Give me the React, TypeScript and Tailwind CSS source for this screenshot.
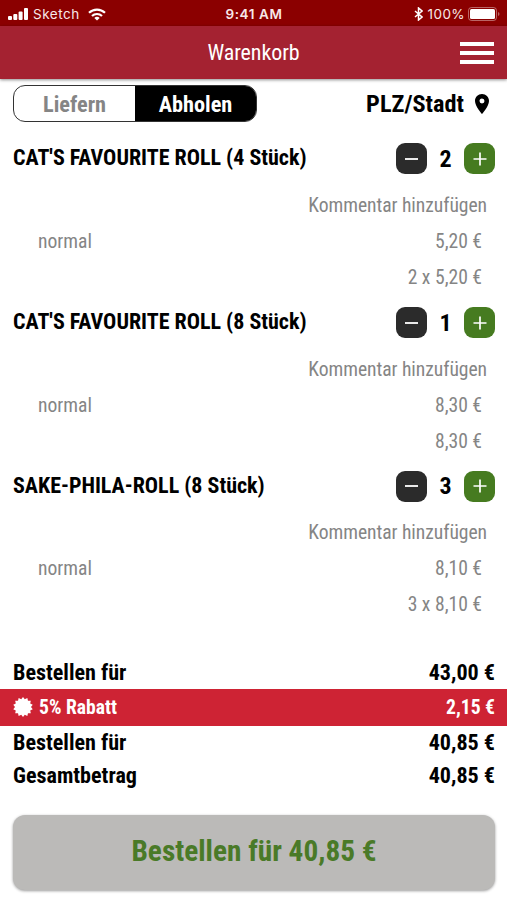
import { useState } from "react";
import { MdLocationOn } from "react-icons/md";

type Artikel = {
  id: number;
  name: string;
  menge: number;
  variante: string;
  preis: string;
  summe: string;
};

const ARTIKEL: Artikel[] = [
  { id: 1, name: "CAT'S FAVOURITE ROLL (4 Stück)", menge: 2, variante: "normal", preis: "5,20 €", summe: "2 x 5,20 €" },
  { id: 2, name: "CAT'S FAVOURITE ROLL (8 Stück)", menge: 1, variante: "normal", preis: "8,30 €", summe: "8,30 €" },
  { id: 3, name: "SAKE-PHILA-ROLL (8 Stück)", menge: 3, variante: "normal", preis: "8,10 €", summe: "3 x 8,10 €" },
];

export default function App() {
  const [abholen, setAbholen] = useState(true);

  return (
    <div className="flex h-[900px] w-[507px] flex-col overflow-hidden bg-white font-['Roboto_Condensed','Roboto',sans-serif] text-black [font-stretch:75%]">
      <StatusBar />

      <header className="grid h-[53px] shrink-0 grid-cols-[1fr_auto_1fr] items-center bg-[#a42231] px-[13px] text-white shadow-[0_1px_3px_rgba(0,0,0,0.45)]">
        <h1 className="col-start-2 text-[22px] leading-none tracking-[-0.1px]">Warenkorb</h1>
        <button aria-label="Menü" className="flex w-[34px] flex-col gap-[5px] justify-self-end">
          <span className="h-1 bg-white" />
          <span className="h-1 bg-white" />
          <span className="h-1 bg-white" />
        </button>
      </header>

      <div className="flex items-center justify-between px-[13px] pt-[6px]">
        <div className="flex h-[37px] w-[244px] overflow-hidden rounded-xl border border-[#333] text-[22.3px] font-bold">
          <button
            onClick={() => setAbholen(false)}
            className={`flex-1 pt-px ${abholen ? "text-[#858585]" : "bg-black text-white"}`}
          >
            Liefern
          </button>
          <button
            onClick={() => setAbholen(true)}
            className={`flex-1 pt-px ${abholen ? "bg-black text-white" : "text-[#858585]"}`}
          >
            Abholen
          </button>
        </div>
        <div className="flex items-center gap-[6px] text-[24.3px] font-bold">
          <span className="pt-px">PLZ/Stadt</span>
          <MdLocationOn className="size-6" />
        </div>
      </div>

      <main className="pt-[18px]">
        {ARTIKEL.map((a) => (
          <ArtikelZeile key={a.id} artikel={a} />
        ))}
      </main>

      <section className="pt-[24.5px] text-[22.1px] font-bold">
        <Summe label="Bestellen für" betrag="43,00 €" />
        <div className="flex h-[37px] items-center bg-[#ce2334] pr-3 pl-[13px] text-[19.6px] text-white">
          <RabattIcon />
          <span className="ml-[6px] flex-1 pt-px">5% Rabatt</span>
          <span className="pt-px">2,15 €</span>
        </div>
        <Summe label="Bestellen für" betrag="40,85 €" />
        <Summe label="Gesamtbetrag" betrag="40,85 €" />
      </section>

      <button className="mr-3 ml-[13px] mt-[23px] h-[75px] shrink-0 rounded-xl bg-[#bbbab8] text-[29.3px] font-bold text-[#4a7a28] shadow-[0_1px_3px_rgba(0,0,0,0.4)]">
        Bestellen für 40,85 €
      </button>
    </div>
  );
}

function ArtikelZeile({ artikel }: { artikel: Artikel }) {
  return (
    <article className="h-[163.6px]">
      <div className="flex h-[37px] items-center justify-between pr-3 pl-[13px]">
        <h2 className="pb-[2px] text-[22px] font-bold">{artikel.name}</h2>
        <div className="flex items-center">
          <button aria-label="Weniger" className="flex size-[31px] items-center justify-center rounded-[9px] bg-[#2b2b2b]">
            <span className="h-[2px] w-[13px] bg-white/90" />
          </button>
          <span className="w-[37px] text-center text-2xl font-bold">{artikel.menge}</span>
          <button aria-label="Mehr" className="flex size-[31px] items-center justify-center rounded-[9px] bg-[#467b20]">
            <svg viewBox="0 0 14 14" className="size-[14px]" stroke="white" strokeWidth="1.7">
              <path d="M7 0.5v13M0.5 7h13" />
            </svg>
          </button>
        </div>
      </div>
      <div className="pt-[10.5px] text-[19.6px] text-[#858585]">
        <p className="pr-5 text-right leading-9 tracking-[-0.05px]">Kommentar hinzufügen</p>
        <div className="flex justify-between pr-[25px] pl-[38px] leading-9">
          <span>{artikel.variante}</span>
          <span>{artikel.preis}</span>
        </div>
        <p className="pr-[25px] text-right leading-9">{artikel.summe}</p>
      </div>
    </article>
  );
}

function Summe({ label, betrag }: { label: string; betrag: string }) {
  return (
    <div className="flex h-[33px] items-center justify-between pt-px pr-3 pl-[13px]">
      <span>{label}</span>
      <span>{betrag}</span>
    </div>
  );
}

function RabattIcon() {
  const zacken = Array.from({ length: 28 }, (_, i) => {
    const winkel = (i * Math.PI) / 14;
    const r = i % 2 ? 8 : 10;
    return `${10 + r * Math.sin(winkel)},${10 - r * Math.cos(winkel)}`;
  }).join(" ");

  return (
    <svg viewBox="0 0 20 20" className="mb-px size-5" fill="white">
      <polygon points={zacken} />
    </svg>
  );
}

function StatusBar() {
  return (
    <div className="grid h-[26px] shrink-0 grid-cols-3 items-center bg-[#8b0000] pt-[2px] pr-[7px] pl-2 font-['Inter',sans-serif] text-[13.5px] text-[#f8e8e8] [font-stretch:100%]">
      <div className="flex items-center">
        <svg viewBox="0 0 20 12" className="h-3 w-5" fill="white">
          <rect x="0" y="8" width="4" height="4" rx="1" />
          <rect x="5.3" y="6" width="4" height="6" rx="1" />
          <rect x="10.6" y="3.5" width="4" height="8.5" rx="1" />
          <rect x="16" y="0" width="4" height="12" rx="1" />
        </svg>
        <span className="ml-[5px] tracking-[0.5px]">Sketch</span>
        <svg viewBox="0 0 18 13" className="ml-2 h-[13px] w-[18px]" fill="none" stroke="white" strokeWidth="2.2">
          <path d="M1 4.8a11.5 11.5 0 0 1 16 0M4 8a7.2 7.2 0 0 1 10 0" />
          <path d="M9 12.6 6.3 10a3.8 3.8 0 0 1 5.4 0z" fill="white" stroke="none" />
        </svg>
      </div>
      <span className="text-center font-semibold tracking-[0.6px]">9:41 AM</span>
      <div className="flex items-center justify-end">
        <svg viewBox="0 0 9 14" className="h-[14px] w-[9px]" fill="none" stroke="white" strokeWidth="1.5">
          <path d="M1 4l7 6-3.5 3V1L8 4l-7 6" />
        </svg>
        <span className="ml-[5px] tracking-[0.4px]">100%</span>
        <svg viewBox="0 0 32 14" className="ml-[3px] h-[14px] w-8">
          <rect x="0.5" y="0.5" width="28" height="13" rx="3" fill="none" stroke="white" strokeOpacity="0.4" />
          <rect x="2" y="2" width="25" height="10" rx="1.5" fill="white" />
          <path d="M30 5v4q1.5-.5 1.5-2T30 5" fill="white" fillOpacity="0.4" />
        </svg>
      </div>
    </div>
  );
}
